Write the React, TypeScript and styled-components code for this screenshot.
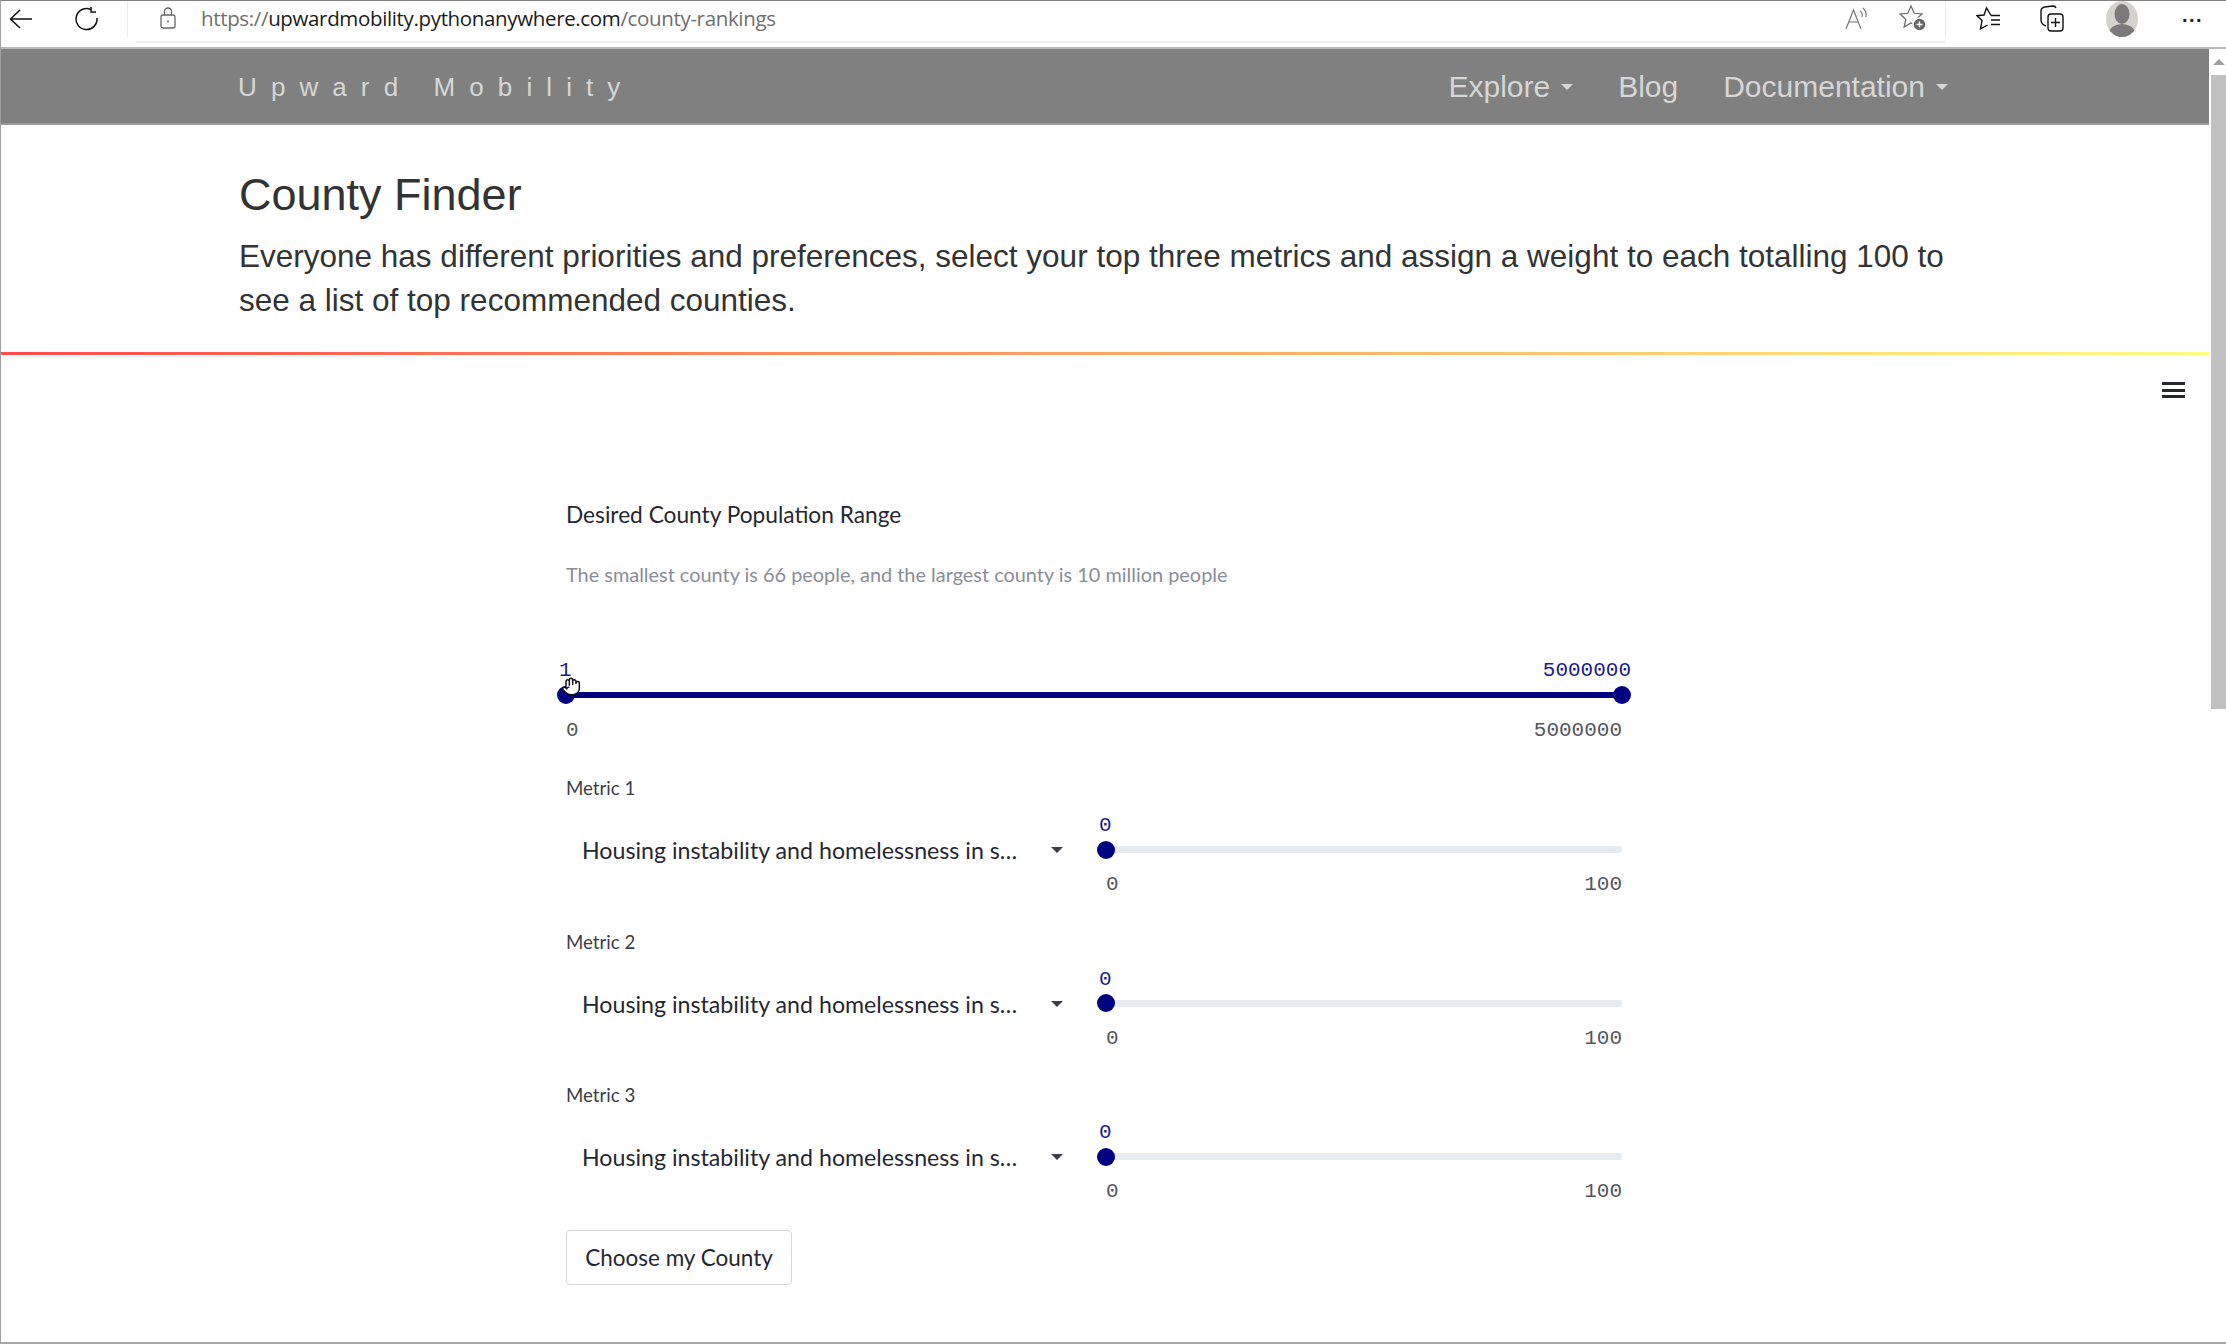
import React from "react";
import styled, { createGlobalStyle } from "styled-components";

const GlobalStyle = createGlobalStyle`
  html, body {
    margin: 0;
    padding: 0;
    background: #ffffff;
    overflow: hidden;
  }
  * {
    box-sizing: border-box;
  }
`;

const Screen = styled.div`
  width: 2226px;
  height: 1344px;
  display: flex;
  flex-direction: column;
  overflow: hidden;
  border-top: 1px solid #808080;
  border-left: 1px solid #a0a0a0;
  border-bottom: 2px solid #a8a8a8;
`;

const BrowserBar = styled.div`
  height: 48px;
  flex: none;
  display: flex;
  align-items: flex-start;
  border-bottom: 2px solid #b8b8b8;
  background: #ffffff;
`;

const NavButtons = styled.div`
  width: 127px;
  height: 36px;
  flex: none;
  display: flex;
  align-items: center;
  gap: 41px;
  padding-left: 8px;
  border-right: 1px solid #ececec;
`;

const AddressBar = styled.div`
  flex: 1;
  height: 42px;
  padding: 0 0 6px 24px;
  margin-left: 8px;
  display: flex;
  align-items: center;
  border-bottom: 2px solid #ececec;
`;

const Url = styled.div`
  margin-left: 25px;
  font-family: "Open Sans", "Noto Sans", sans-serif;
  font-size: 20.5px;
  letter-spacing: -0.35px;
  color: #6e6e6e;
  flex: 1;
  white-space: nowrap;
`;

const UrlHost = styled.span`
  color: #1b1b1b;
`;

const AddressIcons = styled.div`
  display: flex;
  align-items: center;
  gap: 28px;
  padding-right: 18px;
`;

const ToolIcons = styled.div`
  width: 281px;
  height: 36px;
  flex: none;
  display: flex;
  align-items: center;
  gap: 37px;
  padding-left: 30px;
  border-left: 1px solid #ececec;
`;

const Avatar = styled.div`
  width: 32px;
  height: 36px;
  flex: none;
  margin-left: 4px;
  border-radius: 50%;
  background: #d4d2cd;
  overflow: hidden;
`;

const MoreDots = styled.div`
  margin: -8px 0 0 7px;
  font-family: "Liberation Sans", sans-serif;
  font-size: 20px;
  font-weight: 700;
  letter-spacing: 1.5px;
  color: #222222;
  line-height: 18px;
`;

const Viewport = styled.div`
  flex: 1;
  min-height: 0;
  display: flex;
`;

const Page = styled.div`
  flex: 1;
  min-width: 0;
  position: relative;
`;

const Scrollbar = styled.div`
  width: 17px;
  flex: none;
  display: flex;
  flex-direction: column;
  align-items: flex-end;
  background: #ffffff;
`;

const ScrollArrow = styled.div`
  width: 15px;
  height: 26px;
  display: flex;
  align-items: center;
  justify-content: center;
`;

const ScrollThumb = styled.div`
  width: 15px;
  height: 634px;
  background: #c1c1c1;
`;

const NavBar = styled.nav`
  height: 76px;
  background: #808080;
  border-bottom: 2px solid #9a9a9a;
  display: flex;
  align-items: center;
  justify-content: space-between;
  padding: 2px 261px 0 237px;
`;

const Brand = styled.div`
  font-family: "Liberation Sans", Arial, sans-serif;
  font-size: 26px;
  letter-spacing: 14.1px;
  color: #d6d6d6;
`;

const NavLinks = styled.div`
  display: flex;
  gap: 45px;
`;

const NavLink = styled.div`
  display: flex;
  align-items: center;
  gap: 11px;
  font-family: "Liberation Sans", Arial, sans-serif;
  font-size: 30px;
  color: #d6d6d6;
`;

const Caret = styled.span<{ $size?: number; $color?: string; $up?: boolean }>`
  display: inline-block;
  width: 0;
  height: 0;
  border-left: ${(p) => p.$size ?? 6}px solid transparent;
  border-right: ${(p) => p.$size ?? 6}px solid transparent;
  border-top: ${(p) => (p.$up ? "none" : `${p.$size ?? 6}px solid ${p.$color ?? "#d6d6d6"}`)};
  border-bottom: ${(p) => (p.$up ? `${p.$size ?? 6}px solid ${p.$color ?? "#d6d6d6"}` : "none")};
`;

const Hero = styled.header`
  height: 230px;
  padding: 42px 220px 0 238px;
  border-bottom: 3px solid transparent;
  border-image: linear-gradient(90deg, #ff4b4b, #fffd80) 1;
  font-family: "Liberation Sans", Arial, sans-serif;
  color: #333333;
`;

const Title = styled.h1`
  margin: 0;
  font-size: 45px;
  line-height: 55px;
  font-weight: 400;
`;

const Lead = styled.p`
  margin: 12px 0 0;
  font-size: 31.5px;
  line-height: 44px;
`;

const MenuIcon = styled.div`
  position: absolute;
  top: 333px;
  right: 24px;
  width: 23px;
  height: 16px;
  display: flex;
  flex-direction: column;
  justify-content: space-between;
`;

const MenuBar = styled.span`
  height: 3px;
  background: #262730;
`;

const Content = styled.main`
  width: 1065px;
  margin-left: 565px;
  padding-top: 145px;
  font-family: Lato, "Noto Sans", sans-serif;
  color: #262730;
`;

const RangeLabel = styled.div`
  font-size: 22.7px;
  line-height: 30px;
`;

const Caption = styled.div`
  margin-top: 29px;
  font-size: 19.9px;
  line-height: 30px;
  color: #8a8d96;
`;

const SliderBox = styled.div<{ $topGap: number }>`
  margin-top: ${(p) => p.$topGap}px;
  font-family: "Liberation Mono", monospace;
  font-size: 21px;
`;

const ValueRow = styled.div`
  display: flex;
  justify-content: space-between;
  height: 24px;
  line-height: 24px;
  color: #1c1c8c;
`;

const ValueLeft = styled.span`
  margin-left: -7px;
`;

const TickRow = styled.div`
  display: flex;
  justify-content: space-between;
  height: 24px;
  line-height: 24px;
  margin-right: 9px;
  color: #555660;
`;

const Track = styled.div<{ $active?: boolean }>`
  position: relative;
  height: ${(p) => (p.$active ? 6 : 7)}px;
  margin: ${(p) => (p.$active ? "9px 9px 21px 0" : "8px 9px 20px 0")};
  background: ${(p) => (p.$active ? "#000080" : "#e6eaf1")};
  border-radius: 3px;
`;

const Thumb = styled.span<{ $end?: boolean }>`
  position: absolute;
  top: 50%;
  left: ${(p) => (p.$end ? "100%" : "0")};
  width: 18px;
  height: 18px;
  margin: -9px 0 0 -9px;
  border-radius: 50%;
  background: #000080;
`;

const HandCursor = styled.svg`
  position: absolute;
  left: -5px;
  top: -17px;
`;

const MetricLabel = styled.div<{ $first?: boolean }>`
  margin-top: ${(p) => (p.$first ? 31 : 30.5)}px;
  font-size: 18.7px;
  line-height: 28px;
  color: #3c3d47;
`;

const MetricRow = styled.div`
  display: grid;
  grid-template-columns: 508px 1fr;
  gap: 32px;
  align-items: start;
`;

const SelectBox = styled.div`
  height: 54px;
  margin-top: 21px;
  display: flex;
  align-items: center;
  justify-content: space-between;
  padding: 0 11px 0 16px;
  font-size: 23.2px;
`;

const SubmitButton = styled.button`
  display: block;
  width: 226px;
  height: 55px;
  margin-top: 26px;
  background: #ffffff;
  border: 1px solid #d5d8e1;
  border-radius: 4px;
  font-family: inherit;
  font-size: 22.5px;
  color: #262730;
`;

const IconSvg = styled.svg`
  flex: none;
  display: block;
`;

const ArrowLeft = () => (
  <IconSvg width="24" height="20" viewBox="0 0 24 20" fill="none" stroke="#111" strokeWidth="1.5">
    <path d="M23 10H2M11 1l-9.500 9 9.500 9" />
  </IconSvg>
);

const Reload = () => (
  <IconSvg width="26" height="26" viewBox="0 0 26 26" fill="none" stroke="#111" strokeWidth="1.5">
    <path d="M17 3.500A10.500 10.500 0 1 0 23 12" />
    <path d="M17 1v5h5" />
  </IconSvg>
);

const Lock = () => (
  <IconSvg width="16" height="22" viewBox="0 0 16 22" fill="none" stroke="#666" strokeWidth="1.3">
    <rect x="1" y="8" width="14" height="13" rx="2" />
    <path d="M4.500 8V4.500a3.500 3.500 0 0 1 7 0V8" />
    <circle cx="8" cy="14.500" r="1" fill="#666" stroke="none" />
  </IconSvg>
);

const ReadAloud = () => (
  <IconSvg width="26" height="24" viewBox="0 0 26 24" fill="none" stroke="#777" strokeWidth="1.2">
    <path d="M1 23L8.500 4 16 23M4 16h9" />
    <path d="M15 5c2 1.500 2.500 4 2 6M18 2c3 2.500 3.500 6 3 9" />
  </IconSvg>
);

const StarAdd = () => (
  <IconSvg width="28" height="28" viewBox="0 0 28 28" fill="none" stroke="#666" strokeWidth="1.2">
    <path d="M12 2l3.200 7.300 7.800.7-5.900 5.200 1.800 7.800-6.900-4.100-6.900 4.100 1.800-7.800L1 10l7.800-.7z" />
    <circle cx="20.500" cy="20.500" r="6.500" fill="#666" stroke="#fff" strokeWidth="1.500" />
    <path d="M20.500 17.500v6M17.500 20.500h6" stroke="#fff" strokeWidth="1.400" />
  </IconSvg>
);

const Favorites = () => (
  <IconSvg width="26" height="26" viewBox="0 0 26 26" fill="none" stroke="#111" strokeWidth="1.4">
    <path d="M15 9.500L10.500 2 8 9 1 9.700l5 4.800L4.500 23l7-4" />
    <path d="M15 9.500h9M15 14h9M15 18.500h9" />
  </IconSvg>
);

const Collections = () => (
  <IconSvg width="26" height="28" viewBox="0 0 26 28" fill="none" stroke="#111" strokeWidth="1.4">
    <path d="M7 21C4 20 2 18 2 15V6c0-2 1.500-3.500 3.500-4L14 1c1.500 0 2.500.5 3 2" />
    <rect x="9" y="9" width="15" height="17" rx="3" />
    <path d="M16.500 13v9M12 17.500h9" />
  </IconSvg>
);

const AvatarFigure = () => (
  <IconSvg width="32" height="36" viewBox="0 0 32 36">
    <ellipse cx="16" cy="13" rx="7.500" ry="10" fill="#7a7a7a" />
    <ellipse cx="16" cy="32" rx="13" ry="9" fill="#7a7a7a" />
  </IconSvg>
);

type RangeSliderProps = {
  low: string;
  high?: string;
  min: string;
  max: string;
  active?: boolean;
  cursor?: boolean;
  topGap: number;
};

const RangeSlider: React.FC<RangeSliderProps> = ({ low, high, min, max, active, cursor, topGap }) => (
  <SliderBox $topGap={topGap}>
    <ValueRow>
      <ValueLeft>{low}</ValueLeft>
      {high && <span>{high}</span>}
    </ValueRow>
    <Track $active={active}>
      <Thumb />
      {high && <Thumb $end />}
      {cursor && (
        <HandCursor width="20" height="23" viewBox="0 0 24 24" fill="#fff" stroke="#111" strokeWidth="1.8" strokeLinecap="round" strokeLinejoin="round">
          <path d="M18 11V6a2 2 0 0 0-4 0M14 10V4a2 2 0 0 0-4 0v2M10 10.500V6a2 2 0 0 0-4 0v8" />
          <path d="M18 8a2 2 0 1 1 4 0v6a8 8 0 0 1-8 8h-2c-2.800 0-4.500-.9-6-2.400L2.400 16a2 2 0 0 1 2.800-2.800L7 15" />
        </HandCursor>
      )}
    </Track>
    <TickRow>
      <span>{min}</span>
      <span>{max}</span>
    </TickRow>
  </SliderBox>
);

const metrics = ["Metric 1", "Metric 2", "Metric 3"];

const App: React.FC = () => (
  <Screen>
    <GlobalStyle />
    <BrowserBar>
      <NavButtons>
        <ArrowLeft />
        <Reload />
      </NavButtons>
      <AddressBar>
        <Lock />
        <Url>
          https://<UrlHost>upwardmobility.pythonanywhere.com</UrlHost>/county-rankings
        </Url>
        <AddressIcons>
          <ReadAloud />
          <StarAdd />
        </AddressIcons>
      </AddressBar>
      <ToolIcons>
        <Favorites />
        <Collections />
        <Avatar>
          <AvatarFigure />
        </Avatar>
        <MoreDots>...</MoreDots>
      </ToolIcons>
    </BrowserBar>
    <Viewport>
      <Page>
        <NavBar>
          <Brand>Upward Mobility</Brand>
          <NavLinks>
            <NavLink>
              Explore <Caret />
            </NavLink>
            <NavLink>Blog</NavLink>
            <NavLink>
              Documentation <Caret />
            </NavLink>
          </NavLinks>
        </NavBar>
        <Hero>
          <Title>County Finder</Title>
          <Lead>
            Everyone has different priorities and preferences, select your top three metrics and assign a weight to each totalling 100 to see a list of top recommended counties.
          </Lead>
        </Hero>
        <MenuIcon>
          <MenuBar />
          <MenuBar />
          <MenuBar />
        </MenuIcon>
        <Content>
          <RangeLabel>Desired County Population Range</RangeLabel>
          <Caption>The smallest county is 66 people, and the largest county is 10 million people</Caption>
          <RangeSlider low="1" high="5000000" min="0" max="5000000" active cursor topGap={70} />
          {metrics.map((name, i) => (
            <div key={name}>
              <MetricLabel $first={i === 0}>{name}</MetricLabel>
              <MetricRow>
                <SelectBox>
                  Housing instability and homelessness in s…
                  <Caret $size={6} $color="#3c3d47" />
                </SelectBox>
                <div>
                  <RangeSlider low="0" min="0" max="100" topGap={12} />
                </div>
              </MetricRow>
            </div>
          ))}
          <SubmitButton>Choose my County</SubmitButton>
        </Content>
      </Page>
      <Scrollbar>
        <ScrollArrow>
          <Caret $up $size={6} $color="#a0a0a0" />
        </ScrollArrow>
        <ScrollThumb />
      </Scrollbar>
    </Viewport>
  </Screen>
);

export default App;
